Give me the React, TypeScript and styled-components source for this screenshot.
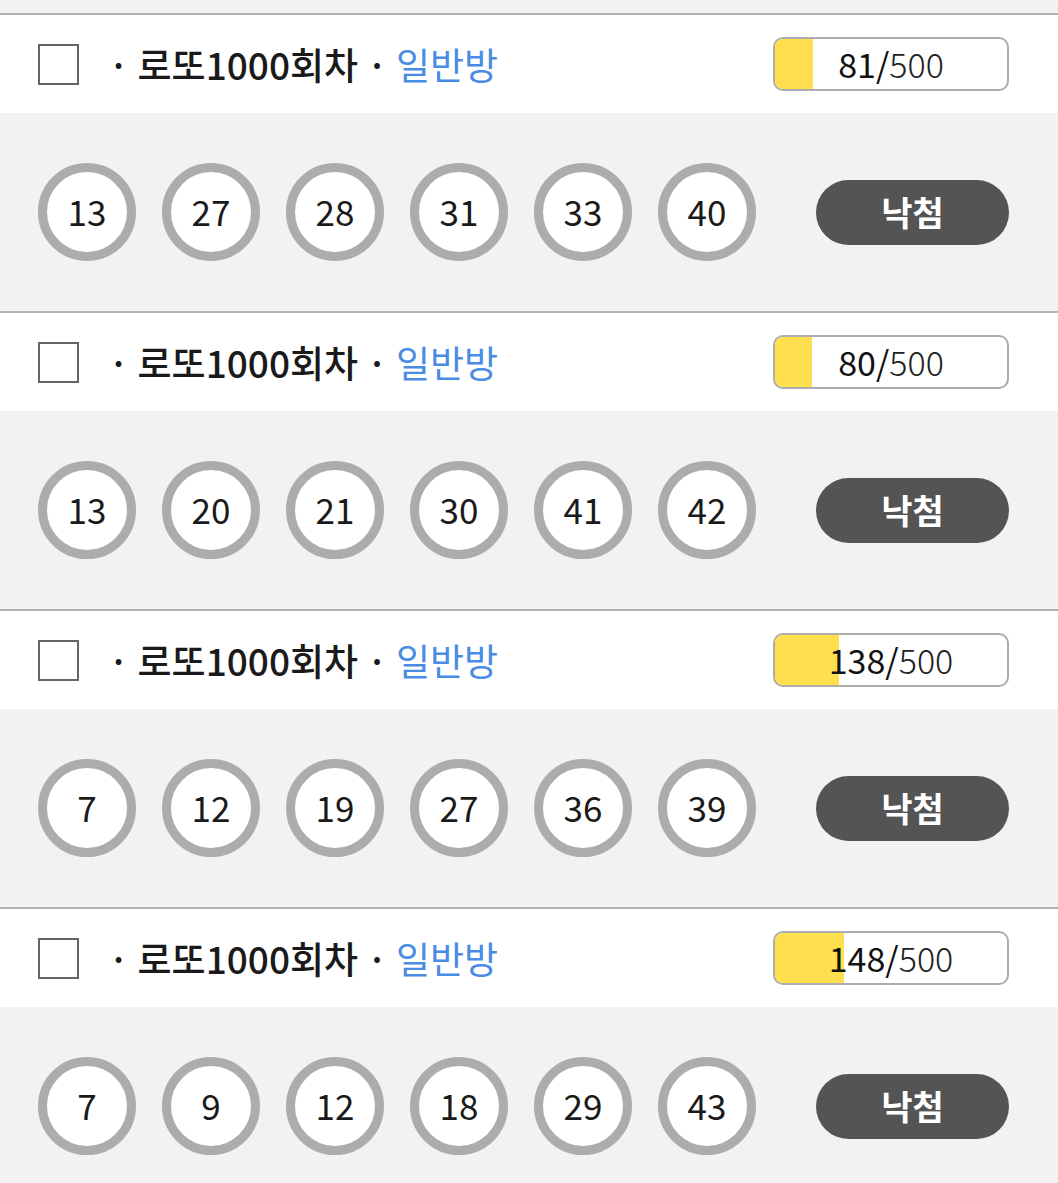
import React from 'react';
import styled, { createGlobalStyle } from 'styled-components';

const GlobalStyle = createGlobalStyle`
  html, body {
    margin: 0;
    padding: 0;
    background: #f2f2f2;
  }
  body {
    font-family: 'Noto Sans CJK KR', 'Noto Sans', sans-serif;
    color: #1a1a1a;
  }
`;

type Ticket = {
  round: number;
  room: string;
  count: number;
  total: number;
  numbers: number[];
  result: string;
};

const tickets: Ticket[] = [
  { round: 1000, room: '일반방', count: 81, total: 500, numbers: [13, 27, 28, 31, 33, 40], result: '낙첨' },
  { round: 1000, room: '일반방', count: 80, total: 500, numbers: [13, 20, 21, 30, 41, 42], result: '낙첨' },
  { round: 1000, room: '일반방', count: 138, total: 500, numbers: [7, 12, 19, 27, 36, 39], result: '낙첨' },
  { round: 1000, room: '일반방', count: 148, total: 500, numbers: [7, 9, 12, 18, 29, 43], result: '낙첨' },
];

const Page = styled.div`
  padding-top: 13px;
  background: #f2f2f2;
  min-height: 1183px;
`;

const Card = styled.section`
  border-top: 2px solid #b3b3b3;
`;

const Header = styled.div`
  height: 98px;
  background: #fff;
  display: flex;
  align-items: center;
  padding: 0 49px 0 38px;
`;

const CheckBox = styled.input`
  appearance: none;
  width: 41px;
  height: 41px;
  margin: 0;
  border: 2px solid #666;
  background: #fff;
  flex-shrink: 0;
`;

const Title = styled.div`
  margin-left: 29px;
  font-size: 37px;
  font-weight: 500;
  color: #1a1a1a;
  white-space: pre;
  flex: 1;
  line-height: 1;
`;

const Room = styled.span`
  color: #4a8be3;
  font-weight: 400;
`;

const Progress = styled.div`
  position: relative;
  width: 236px;
  height: 54px;
  box-sizing: border-box;
  border: 2px solid #acacac;
  border-radius: 10px;
  background: #fff;
  overflow: hidden;
  display: flex;
  align-items: center;
  justify-content: center;
`;

const Fill = styled.div`
  position: absolute;
  left: 0;
  top: 0;
  bottom: 0;
  background: #ffdf4d;
`;

const ProgressText = styled.div`
  position: relative;
  font-size: 34px;
  line-height: 1;
  color: #1a1a1a;
`;

const Count = styled.span`
  font-weight: 400;
  color: #111;
`;

const Total = styled.span`
  font-weight: 300;
  color: #222;
`;

const Body = styled.div`
  height: 198px;
  display: flex;
  align-items: center;
  padding: 0 49px 0 38px;
`;

const Balls = styled.div`
  display: flex;
  gap: 26px;
  flex: 1;
`;

const Ball = styled.div`
  width: 98px;
  height: 98px;
  box-sizing: border-box;
  border-radius: 50%;
  border: 9px solid #acacac;
  background: #fff;
  display: flex;
  align-items: center;
  justify-content: center;
  font-size: 35px;
  line-height: 1;
  padding-bottom: 4px;
  color: #1a1a1a;
`;

const ResultButton = styled.button`
  width: 193px;
  height: 65px;
  border: none;
  border-radius: 33px;
  background: #545454;
  color: #fff;
  font-family: 'Noto Sans CJK KR', 'Noto Sans', sans-serif;
  font-size: 34px;
  font-weight: 700;
  padding: 0;
  padding-bottom: 2px;
`;

const TicketCard: React.FC<{ ticket: Ticket }> = ({ ticket }) => (
  <Card>
    <Header>
      <CheckBox type="checkbox" />
      <Title>
        {`· 로또${ticket.round}회차 · `}
        <Room>{ticket.room}</Room>
      </Title>
      <Progress>
        <Fill style={{ width: `${(ticket.count / ticket.total) * 100}%` }} />
        <ProgressText>
          <Count>{ticket.count}/</Count>
          <Total>{ticket.total}</Total>
        </ProgressText>
      </Progress>
    </Header>
    <Body>
      <Balls>
        {ticket.numbers.map(n => (
          <Ball key={n}>{n}</Ball>
        ))}
      </Balls>
      <ResultButton>{ticket.result}</ResultButton>
    </Body>
  </Card>
);

const App: React.FC = () => (
  <>
    <GlobalStyle />
    <Page>
      {tickets.map((t, i) => (
        <TicketCard key={i} ticket={t} />
      ))}
    </Page>
  </>
);

export default App;
